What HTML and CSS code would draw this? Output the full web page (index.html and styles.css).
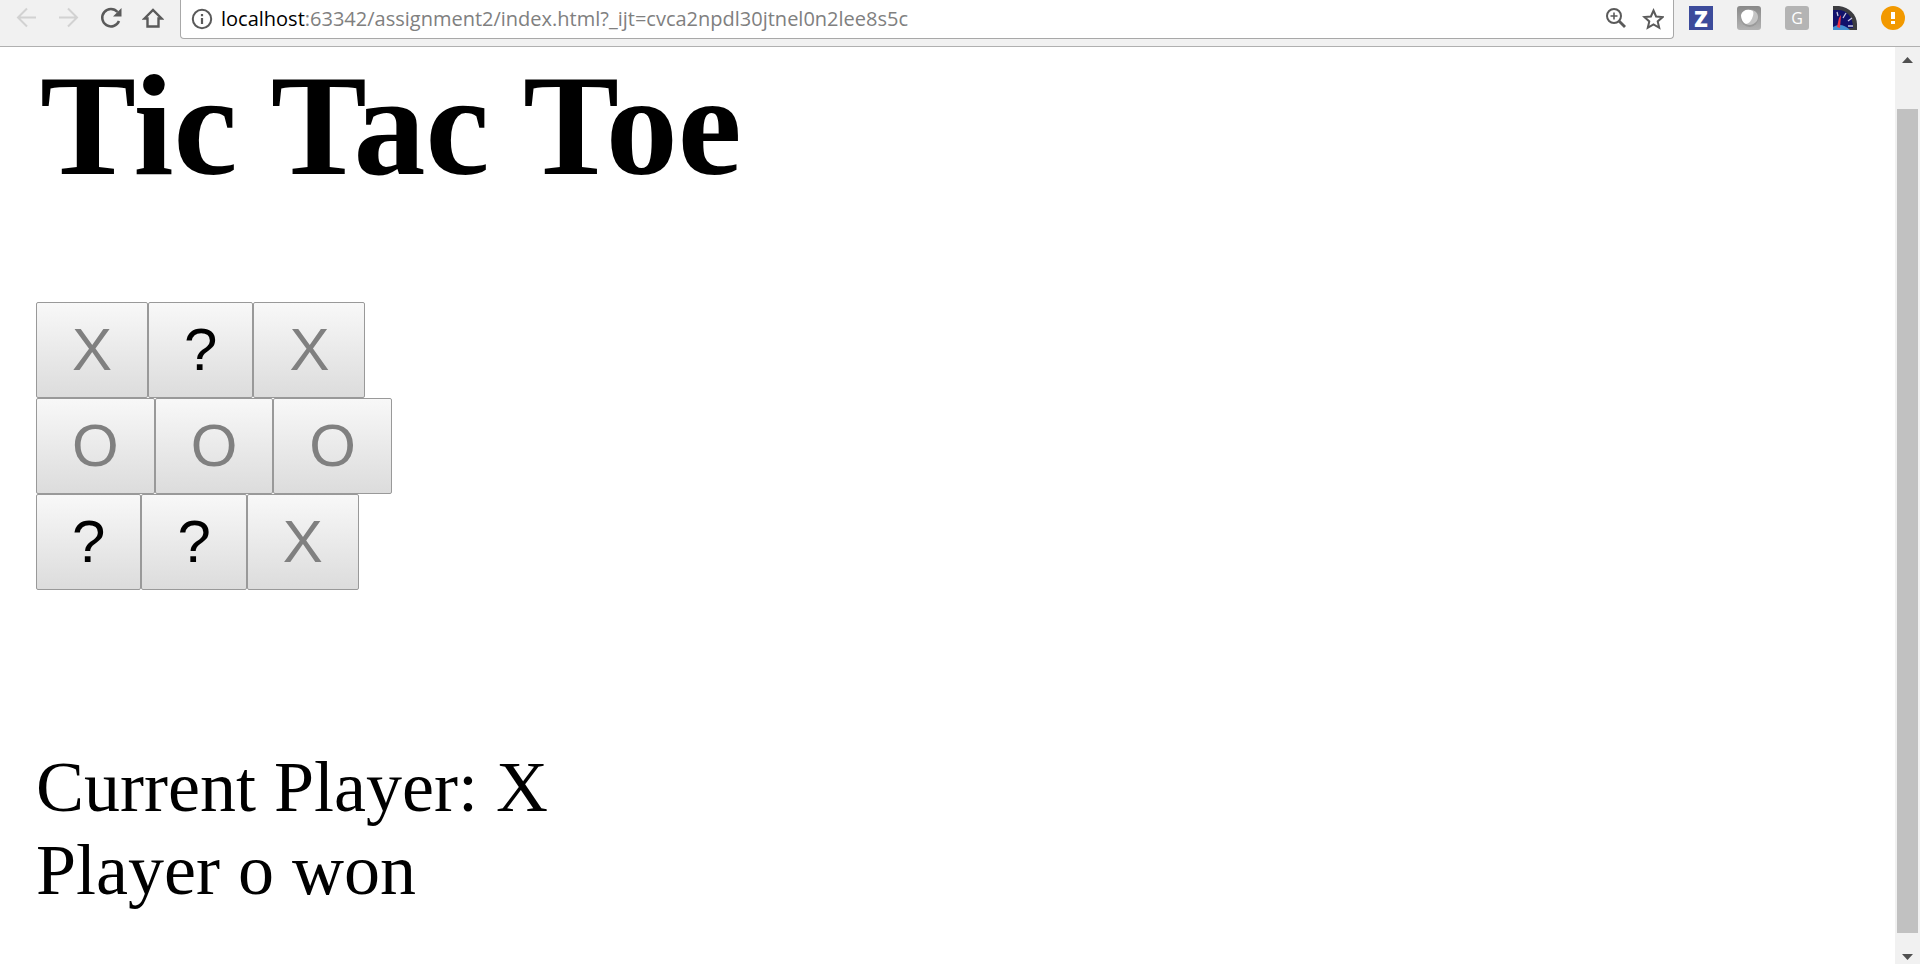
FILE: index.html
```html
<!DOCTYPE html>
<html lang="en">
<head>
<meta charset="utf-8">
<title>Tic Tac Toe</title>
<link rel="stylesheet" href="styles.css">
</head>
<body>
<header class="toolbar">
  <nav class="nav" aria-label="Browser navigation">
    <button class="icon-button" type="button" aria-label="Back" disabled>
      <svg class="icon" viewBox="0 0 22 22"><path d="M20 10.500H2M11 1.500l-9 9 9 9" fill="none" stroke="#d2d2d2" stroke-width="2"/></svg>
    </button>
    <button class="icon-button" type="button" aria-label="Forward" disabled>
      <svg class="icon" viewBox="0 0 22 22"><path d="M1 10.500h18M10 1.500l9 9-9 9" fill="none" stroke="#d2d2d2" stroke-width="2"/></svg>
    </button>
    <button class="icon-button" type="button" aria-label="Reload">
      <svg class="icon" viewBox="0 0 22 22"><path d="M19 14A8.700 8.700 0 1 1 17.500 5" fill="none" stroke="#5a5a5a" stroke-width="2.500"/><path d="M21.500 1v8.500H13z" fill="#5a5a5a"/></svg>
    </button>
    <button class="icon-button" type="button" aria-label="Home">
      <svg class="icon" viewBox="0 0 22 22"><path d="M2.500 11.500 11 3l8.500 8.500H16.500v8h-11v-8z" fill="none" stroke="#5a5a5a" stroke-width="2.400"/></svg>
    </button>
  </nav>
  <div class="address">
    <svg class="icon" viewBox="0 0 22 22"><circle cx="11" cy="11" r="9.200" fill="none" stroke="#5a5a5a" stroke-width="2"/><path d="M11 6v2.200M11 10v6" stroke="#5a5a5a" stroke-width="2.200"/></svg>
    <a class="url" href="#board"><span class="host">localhost</span>:63342/assignment2/index.html?_ijt=cvca2npdl30jtnel0n2lee8s5c</a>
    <div class="address-actions">
      <button class="icon-button" type="button" aria-label="Zoom">
        <svg class="icon" viewBox="0 0 22 22"><circle cx="9" cy="8" r="7" fill="none" stroke="#5a5a5a" stroke-width="2"/><path d="m13.500 12.500 6.500 6.500" stroke="#5a5a5a" stroke-width="2.800"/><path d="M9 4.500v7M5.500 8h7" stroke="#5a5a5a" stroke-width="1.600"/></svg>
      </button>
      <button class="icon-button" type="button" aria-label="Bookmark this page">
        <svg class="icon" viewBox="0 0 22 22"><path d="m11.500 2.500 2.600 6 6.500.600-4.900 4.300 1.500 6.400-5.700-3.400-5.700 3.400 1.500-6.400L2.400 9.100l6.500-.600z" fill="none" stroke="#5a5a5a" stroke-width="2"/></svg>
      </button>
    </div>
  </div>
  <div class="extensions">
    <button class="icon-button" type="button" aria-label="Z extension"><span class="tile tile-z">Z</span></button>
    <button class="icon-button" type="button" aria-label="Pearl extension">
      <svg class="ext" viewBox="0 0 24 24"><defs><linearGradient id="metal" x2="0" y2="1"><stop stop-color="#888"/><stop offset="1" stop-color="#b4b4b4"/></linearGradient></defs><rect width="24" height="24" rx="3" fill="url(#metal)"/><circle cx="12.500" cy="12" r="9" fill="#999"/><path d="M15 4c6 1 8 8 4 12-3 3-7 4-10 2 5-2 9-8 6-14" fill="#c4c4c4"/><path d="M4 9c1-4 5-6 9-5 3 0 4 2 3 6-1 4-4 8-7 8-3-1-5-5-5-9" fill="#fff"/></svg>
    </button>
    <button class="icon-button" type="button" aria-label="G extension"><span class="tile tile-g">G</span></button>
    <button class="icon-button" type="button" aria-label="Speed gauge extension">
      <svg class="ext" viewBox="0 0 24 24"><path d="M0 0h6c10 1 18 9 18 18v6H0z" fill="#3c3c40"/><path d="M0 4h5c9 0 15 7 15 18H0z" fill="#11116b"/><path d="M0 21c5-3 11-3 17 3H0z" fill="#438fd2"/><path d="m4 21 2-9 2-3-1 13z" fill="#f23545"/><path d="m4 6 1 4M13 7l-3 5M19 12l-4 3M20 20h-5" stroke="#c8c8e0" stroke-width="1.300"/></svg>
    </button>
    <button class="icon-button" type="button" aria-label="Browser alert">
      <svg class="ext" viewBox="0 0 24 24"><circle cx="12" cy="12" r="12" fill="#f29900"/><path d="M12 6v7M12 15v3" stroke="#fff" stroke-width="4"/></svg>
    </button>
  </div>
</header>
<div class="viewport">
  <main class="page">
    <h1 class="title">Tic Tac Toe</h1>
    <div class="board" id="board">
      <div class="row"><button class="cell" type="button" disabled>X</button><button class="cell" type="button">?</button><button class="cell" type="button" disabled>X</button></div>
      <div class="row"><button class="cell" type="button" disabled>O</button><button class="cell" type="button" disabled>O</button><button class="cell" type="button" disabled>O</button></div>
      <div class="row"><button class="cell" type="button">?</button><button class="cell" type="button">?</button><button class="cell" type="button" disabled>X</button></div>
    </div>
    <div class="status">
      <div>Current Player: X</div>
      <div>Player o won</div>
    </div>
  </main>
  <div class="scrollbar" aria-hidden="true">
    <svg class="arrow" viewBox="0 0 11 6"><path d="M5.500 0 11 6H0z" fill="#505050"/></svg>
    <div class="track"><div class="thumb"></div></div>
    <svg class="arrow" viewBox="0 0 11 6"><path d="M0 0h11L5.500 6z" fill="#505050"/></svg>
  </div>
</div>
</body>
</html>
```

FILE: styles.css
```css
* { box-sizing: border-box; }

body {
  display: flex;
  flex-direction: column;
  min-height: 100vh;
  margin: 0;
  background: #fff;
  color: #000;
  font-family: "Liberation Serif", "Times New Roman", serif;
}

.toolbar {
  display: flex;
  align-items: flex-start;
  height: 47px;
  background: #f1f1f1;
  border-bottom: 1px solid #b0b0b0;
}

.nav {
  display: flex;
  gap: 20px;
  padding: 7px 16px 0;
}

.icon-button {
  display: block;
  padding: 0;
  border: 0;
  background: none;
}

.icon {
  display: block;
  flex: none;
  width: 22px;
  height: 22px;
}

.address {
  display: flex;
  flex: 1;
  align-items: center;
  height: 39px;
  padding: 0 9px 1px 10px;
  background: #fff;
  border: 1px solid #a8a8a8;
  border-top: 0;
  border-radius: 0 0 4px 4px;
}

.url {
  flex: 1;
  margin-left: 8px;
  color: #808080;
  font-family: "Open Sans", "Noto Sans", sans-serif;
  font-size: 20px;
  line-height: 28px;
  text-decoration: none;
}

.host { color: #000; }

.address-actions {
  display: flex;
  gap: 15px;
}

.extensions {
  display: flex;
  gap: 24px;
  padding: 6px 15px 0;
}

.ext,
.tile {
  display: block;
  width: 24px;
  height: 24px;
}

.tile {
  color: #fff;
  font-family: "Open Sans", sans-serif;
  line-height: 24px;
  text-align: center;
}

.tile-z {
  background: #3c4b9b;
  font-size: 22px;
  font-weight: 800;
}

.tile-g {
  background: #b4b4b4;
  border-radius: 3px;
  font-size: 16px;
}

.viewport {
  display: flex;
  flex: 1;
}

.page {
  flex: 1;
  padding: 0 36px;
}

.title {
  margin: 0 0 97px;
  padding-left: 4px;
  font-size: 144px;
  line-height: 158px;
}

.row { display: flex; }

.cell {
  height: 96px;
  padding: 0 35px;
  background: linear-gradient(#f8f8f8, #dcdcdc);
  border: 1px solid #999;
  border-radius: 2px;
  color: #000;
  font-family: "Liberation Sans", Arial, sans-serif;
  font-size: 60px;
  line-height: 72px;
}

.cell:disabled { color: #808080; }

.status {
  margin-top: 156px;
  font-size: 72px;
  line-height: 83px;
}

.scrollbar {
  display: flex;
  flex-direction: column;
  align-items: center;
  width: 25px;
  padding: 10px 2px 4px;
  background: #f1f1f1;
}

.arrow {
  display: block;
  width: 11px;
  height: 6px;
}

.track {
  flex: 1;
  width: 100%;
  padding: 46px 0 21px;
}

.thumb {
  height: 100%;
  background: #c1c1c1;
}
```
